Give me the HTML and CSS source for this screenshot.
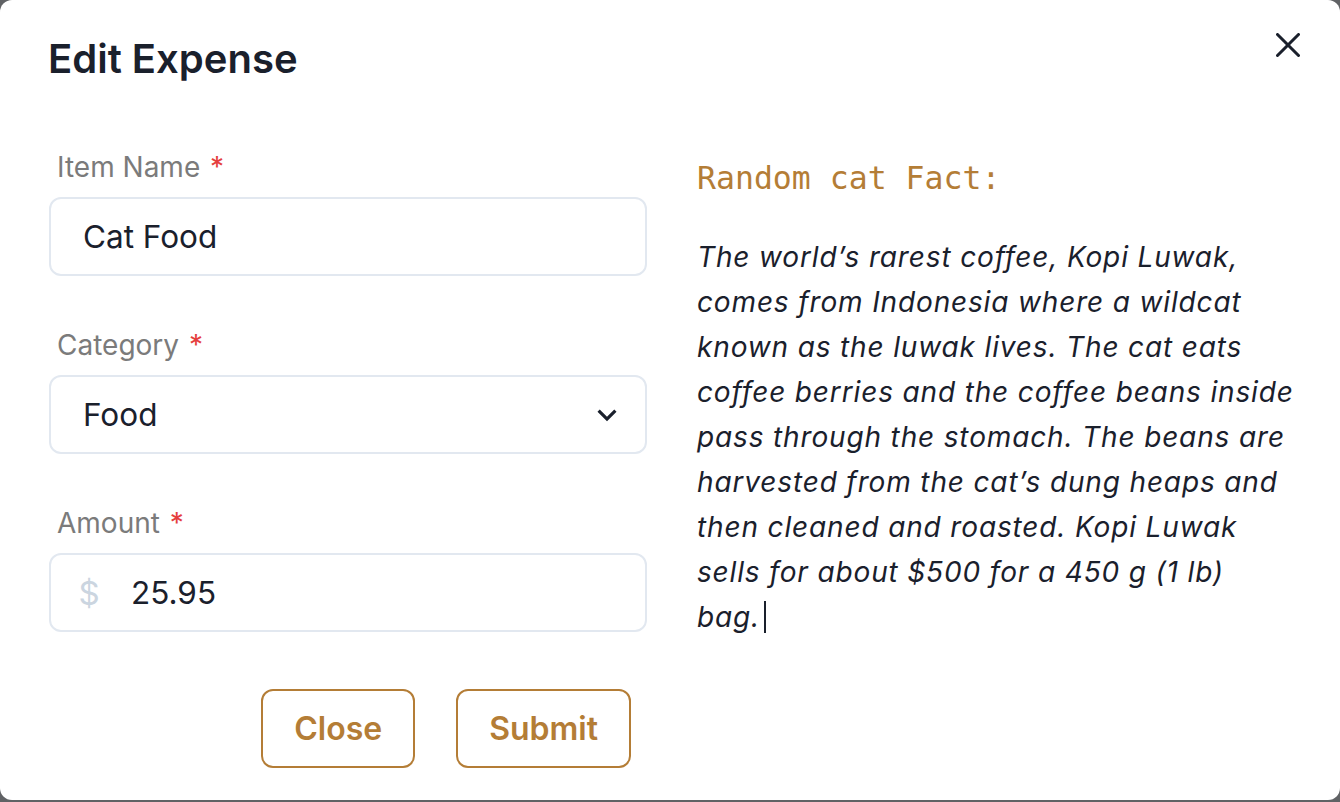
FILE: index.html
```html
<!DOCTYPE html>
<html lang="en">
<head>
<meta charset="utf-8">
<title>Edit Expense</title>
<link rel="stylesheet" href="styles.css">
</head>
<body>
<div class="modal" role="dialog" aria-labelledby="modal-title">
  <header class="modal-header">
    <h2 id="modal-title" class="modal-title">Edit Expense</h2>
    <button class="close-btn" type="button" aria-label="Close">
      <svg viewBox="0 0 24 24" width="24" height="24" aria-hidden="true"><path fill="currentColor" d="M.439,21.44a1.5,1.5,0,0,0,2.122,2.121L11.823,14.3a.25.25,0,0,1,.354,0l9.262,9.263a1.5,1.5,0,1,0,2.122-2.121L14.3,12.177a.25.25,0,0,1,0-.354l9.263-9.262A1.5,1.5,0,0,0,21.439.44L12.177,9.7a.25.25,0,0,1-.354,0L2.561.44A1.5,1.5,0,0,0,.439,2.561L9.7,11.823a.25.25,0,0,1,0,.354Z"/></svg>
    </button>
  </header>
  <div class="modal-body">
    <form class="form-col">
      <div class="field">
        <label class="label" for="item-name">Item Name <span class="req">*</span></label>
        <div class="control">
          <input id="item-name" class="input" type="text" value="Cat Food">
        </div>
      </div>
      <div class="field">
        <label class="label" for="category">Category <span class="req">*</span></label>
        <div class="control">
          <select id="category" class="input select">
            <option>Food</option>
          </select>
          <svg class="chevron" viewBox="0 0 24 24" width="38" height="38" aria-hidden="true"><path fill="currentColor" d="M16.59 8.59L12 13.17 7.41 8.59 6 10l6 6 6-6z"/></svg>
        </div>
      </div>
      <div class="field">
        <label class="label" for="amount">Amount <span class="req">*</span></label>
        <div class="control">
          <span class="addon">$</span>
          <input id="amount" class="input amount" type="text" value="25.95">
        </div>
      </div>
      <div class="actions">
        <button class="btn" type="button">Close</button>
        <button class="btn" type="submit">Submit</button>
      </div>
    </form>
    <section class="fact-col">
      <h3 class="fact-title">Random cat Fact:</h3>
      <p class="fact-text">The world’s rarest coffee, Kopi Luwak,<br>comes from Indonesia where a wildcat<br>known as the luwak lives. The cat eats<br>coffee berries and the coffee beans inside<br>pass through the stomach. The beans are<br>harvested from the cat’s dung heaps and<br>then cleaned and roasted. Kopi Luwak<br>sells for about $500 for a 450 g (1 lb)<br>bag.<span class="caret"></span></p>
    </section>
  </div>
</div>
</body>
</html>
```

FILE: styles.css
```css
* { box-sizing: border-box; }

html, body {
  margin: 0;
  padding: 0;
}

body {
  background: #606265;
  font-family: Inter, "Noto Sans", "Liberation Sans", sans-serif;
  color: #1a202c;
  width: 1340px;
  height: 802px;
  overflow: hidden;
}

.modal {
  width: 1340px;
  height: 800px;
  background: #ffffff;
  border-radius: 12px;
  display: flex;
  flex-direction: column;
}

.modal-header {
  display: flex;
  justify-content: space-between;
  align-items: flex-start;
  padding: 0 40px 0 48px;
}

.modal-title {
  margin: 0;
  padding-top: 35px;
  font-size: 40px;
  line-height: 47px;
  font-weight: 600;
  color: #1a202c;
}

.close-btn {
  margin-top: 33px;
  padding: 0;
  border: 0;
  background: transparent;
  width: 24px;
  height: 24px;
  color: #1a202c;
  display: flex;
  cursor: pointer;
}

.close-btn svg { width: 24px; height: 24px; }

.modal-body {
  display: flex;
  gap: 50px;
  padding: 65px 40px 0 49px;
}

.form-col {
  width: 598px;
  margin: 0;
  display: flex;
  flex-direction: column;
}

.field + .field { margin-top: 49px; }

.label {
  display: block;
  font-size: 28px;
  line-height: 41px;
  font-weight: 400;
  color: #7b7b7b;
  padding-left: 8px;
  margin-bottom: 9px;
}

.req {
  color: #e53e3e;
  margin-left: 2px;
}

.control {
  height: 79px;
  border: 2px solid #e2e8f0;
  border-radius: 12px;
  display: flex;
  align-items: center;
  background: #fff;
}

.input {
  flex: 1;
  min-width: 0;
  height: 100%;
  border: 0;
  outline: none;
  background: transparent;
  font-family: Inter, "Noto Sans", "Liberation Sans", sans-serif;
  font-size: 31.5px;
  color: #1a202c;
  padding: 0 0 0 32px;
  margin: 0;
}

.select {
  -webkit-appearance: none;
  appearance: none;
}

.chevron {
  flex: none;
  color: #1a202c;
  margin-right: 19px;
}

.addon {
  flex: none;
  width: 76px;
  text-align: center;
  font-size: 33px;
  color: #cbd5e0;
  font-weight: 400;
}

.input.amount { padding-left: 4px; }

.actions {
  display: flex;
  justify-content: flex-end;
  gap: 41px;
  margin-top: 57px;
  padding-right: 16px;
}

.btn {
  height: 79px;
  padding: 0 31px;
  border: 2px solid #b47d36;
  border-radius: 12px;
  background: #fff;
  color: #b47d36;
  font-family: Inter, "Noto Sans", "Liberation Sans", sans-serif;
  font-size: 32px;
  font-weight: 600;
  cursor: pointer;
}

.fact-col {
  flex: 1;
  padding-top: 12px;
}

.fact-title {
  margin: 0;
  font-family: "DejaVu Sans Mono", "Liberation Mono", monospace;
  font-weight: 400;
  font-size: 31.5px;
  line-height: 38px;
  color: #b47d36;
}

.fact-text {
  margin: 38px 0 0;
  font-size: 28px;
  line-height: 45px;
  font-style: italic;
  letter-spacing: 0.85px;
  color: #1a202c;
  white-space: nowrap;
}

.caret {
  display: inline-block;
  width: 2px;
  height: 32px;
  background: #1a202c;
  margin-left: 4px;
  vertical-align: -6px;
}
```
